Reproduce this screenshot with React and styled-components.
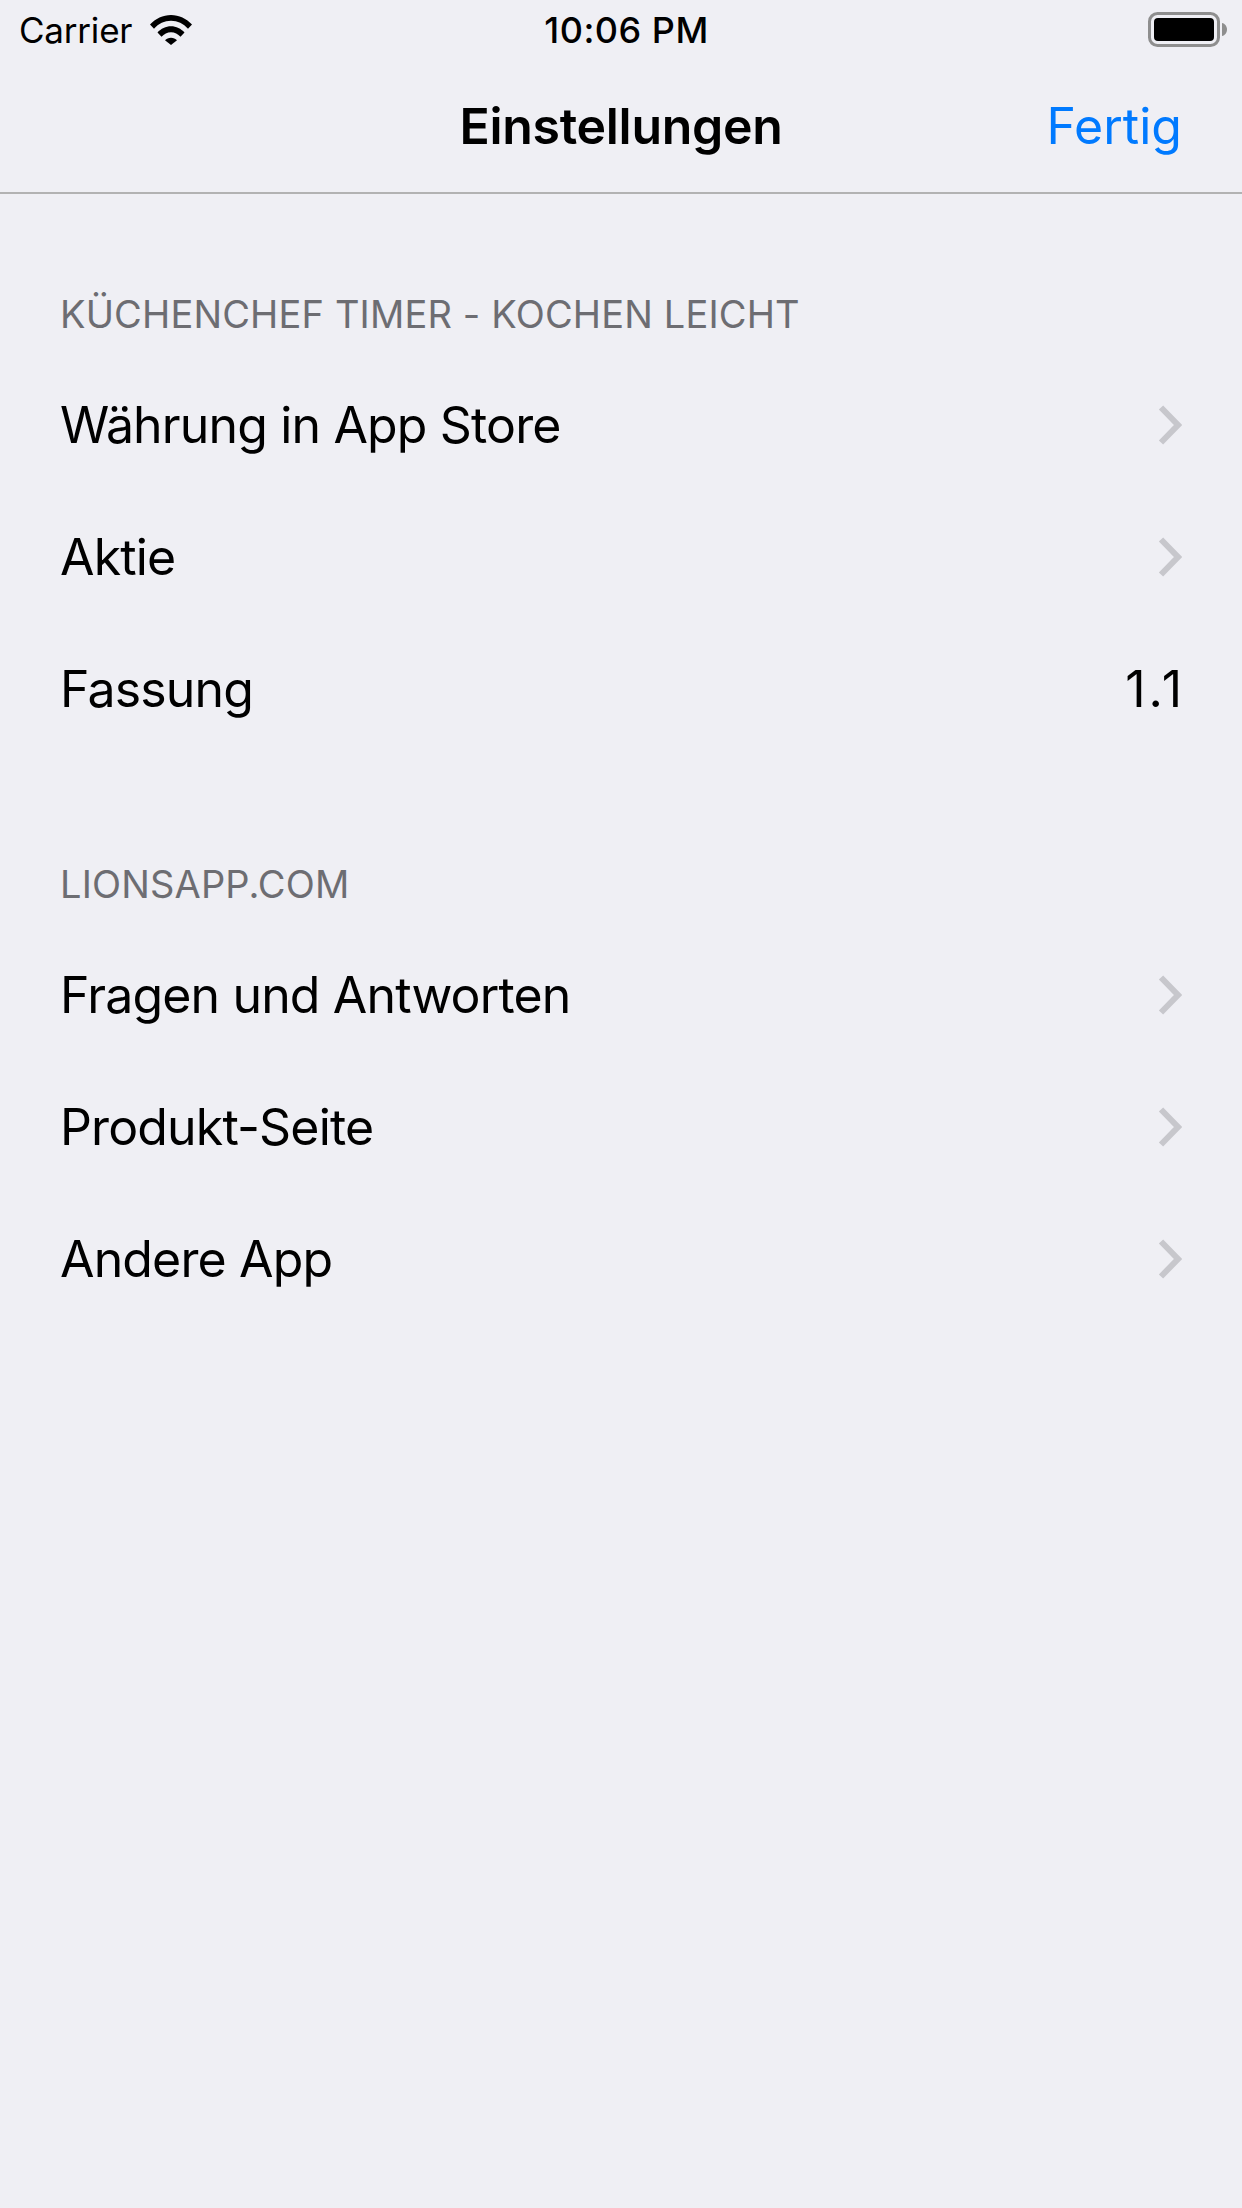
import React from "react";
import styled, { createGlobalStyle } from "styled-components";

const GlobalStyle = createGlobalStyle`
  html, body {
    margin: 0;
    padding: 0;
    background: #efeff4;
  }
`;

const Screen = styled.div`
  width: 1242px;
  height: 2208px;
  background: #efeff4;
  font-family: Inter, "Liberation Sans", sans-serif;
  color: #000;
  overflow: hidden;
`;

const StatusBar = styled.div`
  height: 60px;
  display: grid;
  grid-template-columns: 1fr auto 1fr;
  align-items: center;
  padding: 0 14px 0 19px;
  box-sizing: border-box;
`;

const StatusLeft = styled.div`
  display: flex;
  align-items: center;
  gap: 18px;
  font-size: 35px;
  letter-spacing: -0.2px;
`;

const Clock = styled.div`
  font-size: 36px;
  font-weight: 500;
  letter-spacing: 0.5px;
  margin-left: 6px;
`;

const StatusRight = styled.div`
  display: flex;
  justify-content: flex-end;
`;

const NavBar = styled.div`
  height: 132px;
  display: grid;
  grid-template-columns: 1fr auto 1fr;
  align-items: center;
  padding: 0 60px;
  border-bottom: 2px solid #b2b2b2;
`;

const NavTitle = styled.div`
  grid-column: 2;
  font-size: 50px;
  font-weight: 600;
  letter-spacing: -0.3px;
`;

const DoneButton = styled.div`
  justify-self: end;
  font-size: 50px;
  color: #007aff;
`;

const SectionHeader = styled.div`
  height: 90px;
  margin-top: ${(p) => (p.$first ? "75px" : "84px")};
  padding: 0 60px;
  display: flex;
  align-items: center;
  font-size: 38px;
  letter-spacing: 0.15px;
  color: #6d6d72;
`;

const Row = styled.div`
  height: 132px;
  padding: 0 60px;
  display: flex;
  align-items: center;
  justify-content: space-between;
  font-size: 50px;
  letter-spacing: -0.85px;
`;

const RowLabel = styled.span``;

const RowValue = styled.span`
  letter-spacing: 3px;
  margin-right: -3px;
`;

const Chevron = () => (
  <svg width="24" height="40" viewBox="0 0 24 40" fill="none">
    <path d="M3 2.5 L20 20 L3 37.5" stroke="#c7c7cc" strokeWidth="6" />
  </svg>
);

const Wifi = () => (
  <svg width="42" height="30" viewBox="0 0 42 30">
    <path d="M0 9.5C5.5 3.6 13 0 21 0s15.5 3.6 21 9.5l-4 4.2C33.5 8.8 27.5 5.8 21 5.8S8.5 8.8 4 13.7z" />
    <path d="M7.5 17.5C11 13.7 15.8 11.3 21 11.3s10 2.4 13.5 6.2l-4 4.2C28 19 24.7 17.2 21 17.2s-7 1.8-9.5 4.5z" />
    <path d="M15 25.3C16.5 23.7 18.6 22.7 21 22.7s4.5 1 6 2.6L21 30z" />
  </svg>
);

const Battery = () => (
  <svg width="80" height="36" viewBox="0 0 80 36">
    <rect x="1.5" y="1.5" width="69" height="32" rx="8" fill="none" stroke="#8e8e8e" strokeWidth="3" />
    <rect x="6" y="6" width="60" height="23" rx="4" fill="#000" />
    <path d="M74 11c3 .6 5 3.2 5 6.5s-2 5.9-5 6.5z" fill="#8e8e8e" />
  </svg>
);

const sections = [
  {
    title: "KÜCHENCHEF TIMER - KOCHEN LEICHT",
    rows: [
      { label: "Währung in App Store" },
      { label: "Aktie" },
      { label: "Fassung", value: "1.1" },
    ],
  },
  {
    title: "LIONSAPP.COM",
    rows: [
      { label: "Fragen und Antworten" },
      { label: "Produkt-Seite" },
      { label: "Andere App" },
    ],
  },
];

export default function App() {
  return (
    <Screen>
      <GlobalStyle />
      <StatusBar>
        <StatusLeft>
          Carrier
          <Wifi />
        </StatusLeft>
        <Clock>10:06 PM</Clock>
        <StatusRight>
          <Battery />
        </StatusRight>
      </StatusBar>
      <NavBar>
        <NavTitle>Einstellungen</NavTitle>
        <DoneButton>Fertig</DoneButton>
      </NavBar>
      {sections.map((s, i) => (
        <section key={s.title}>
          <SectionHeader $first={i === 0}>{s.title}</SectionHeader>
          {s.rows.map((r) => (
            <Row key={r.label}>
              <RowLabel>{r.label}</RowLabel>
              {r.value ? <RowValue>{r.value}</RowValue> : <Chevron />}
            </Row>
          ))}
        </section>
      ))}
    </Screen>
  );
}
